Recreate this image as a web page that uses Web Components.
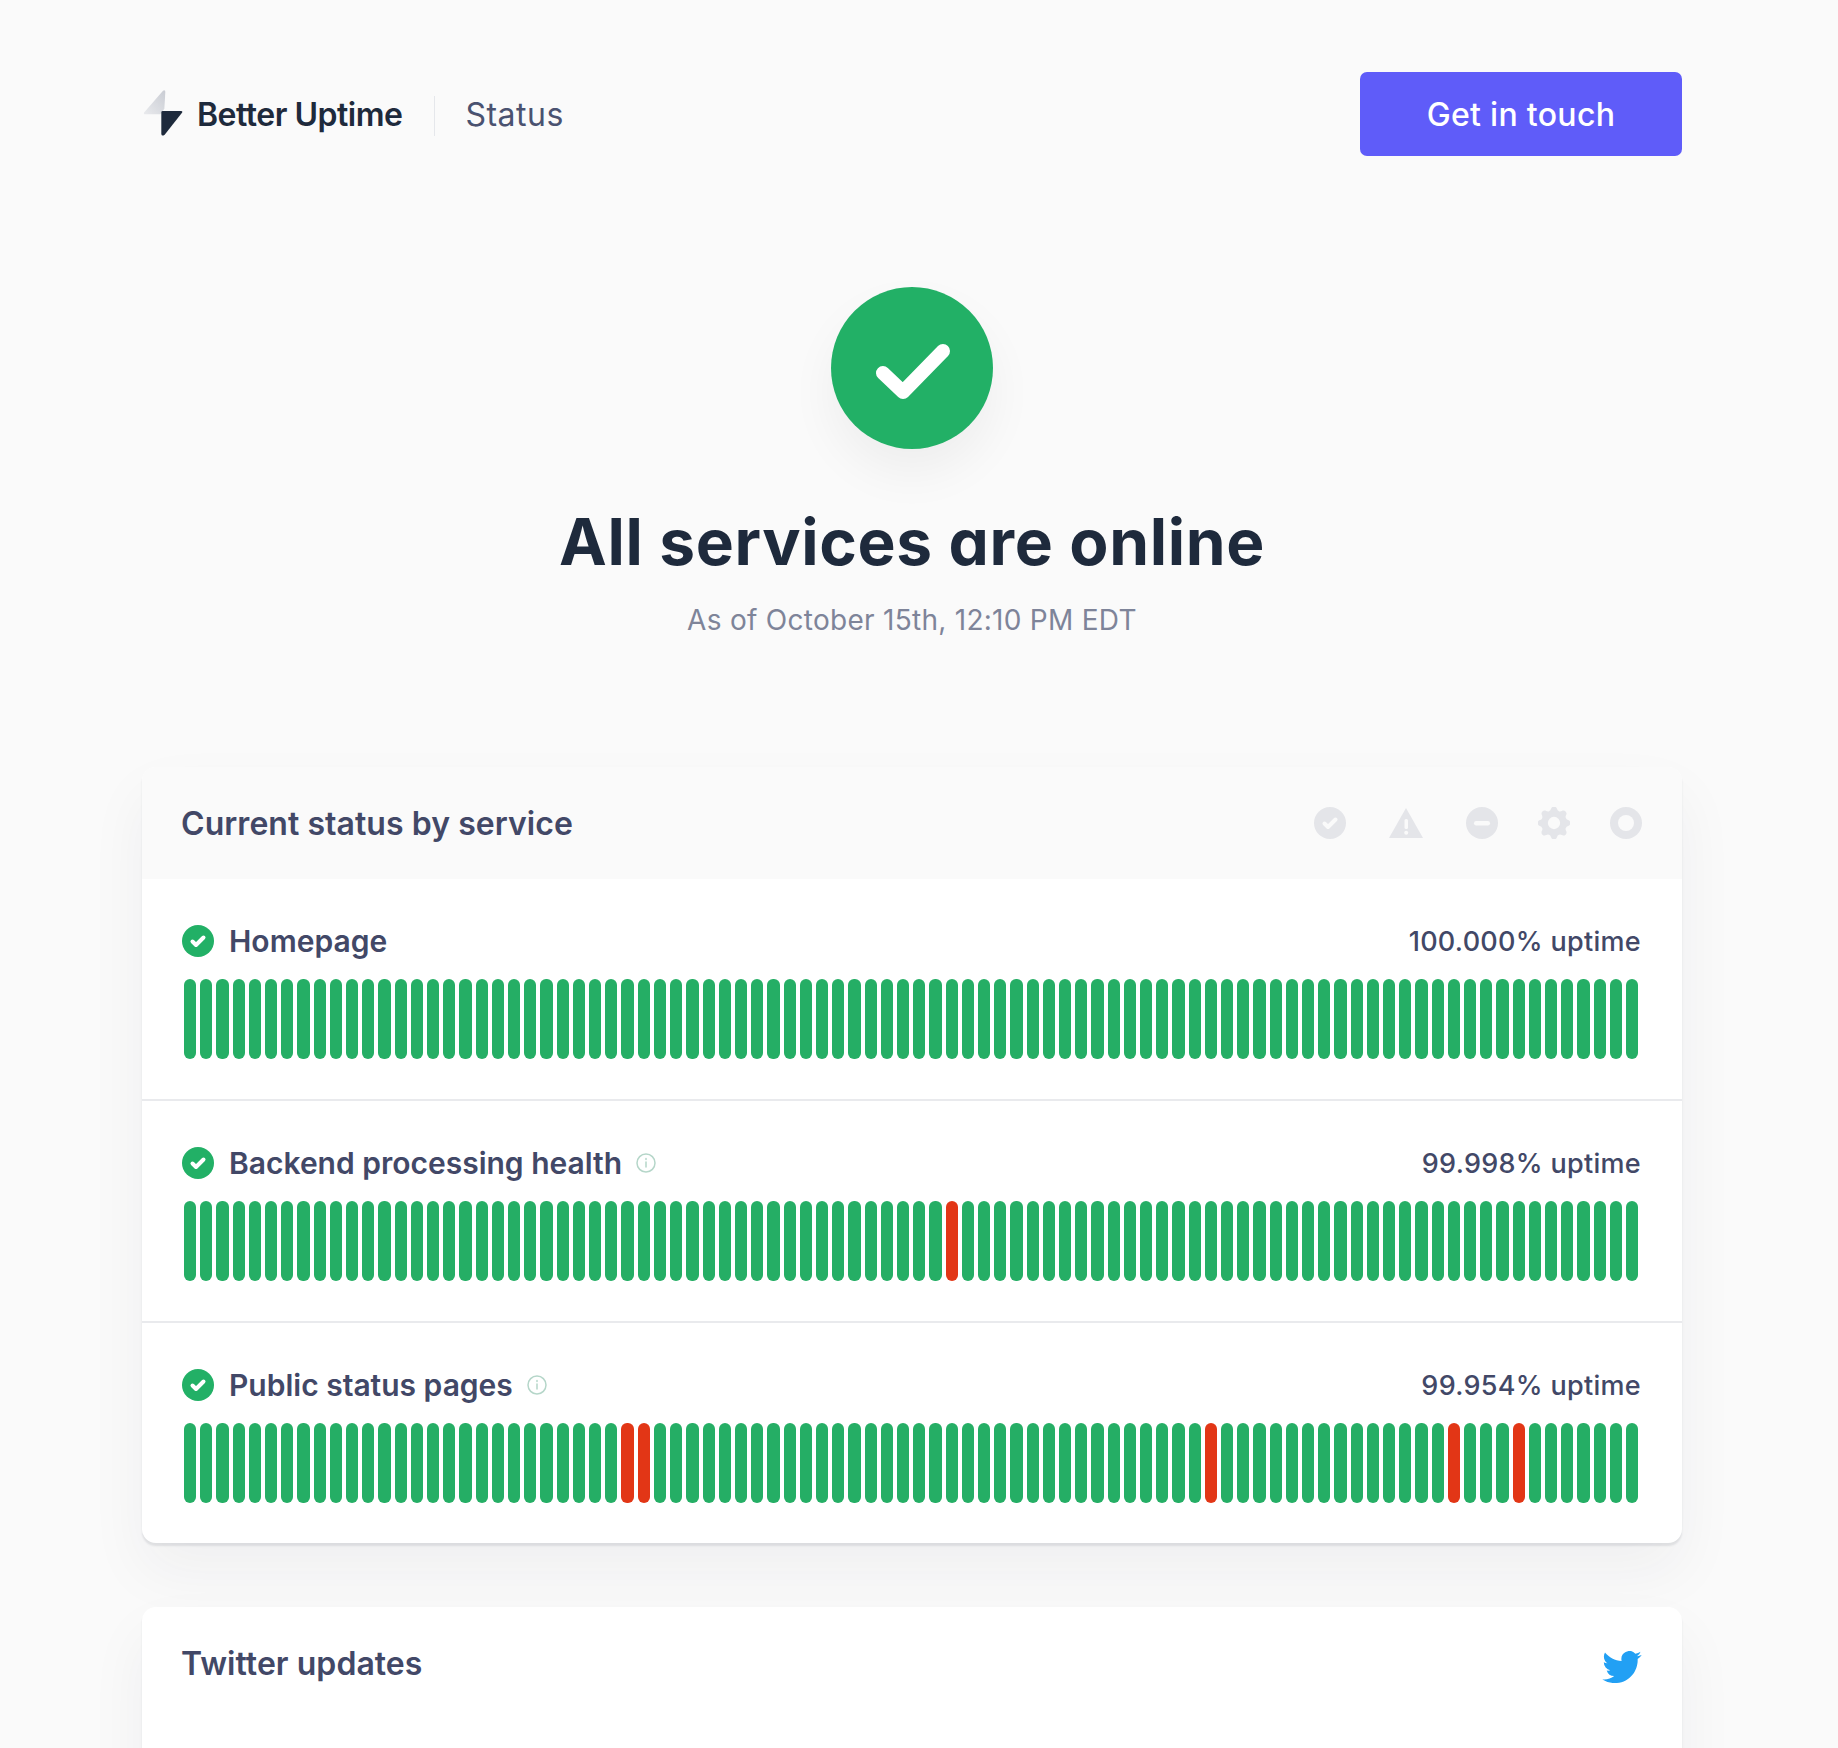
<!doctype html>
<html lang="en">
<head>
<meta charset="utf-8">
<title>Better Uptime Status</title>
<style>
  html, body { margin: 0; height: 100%; overflow: hidden; background: #fafafa; }
  body { font-family: Inter, "Noto Sans", sans-serif; color: #1e2a3c; }
  /* the reference reserves a scrollbar's width on the right, so the column sits off centre */
  .page { width: 1540px; padding-left: 142px; }
</style>
</head>
<body>
<div class="page">
  <bu-header></bu-header>
  <bu-hero title="All services are online" subtitle="As of October 15th, 12:10 PM EDT"></bu-hero>

  <bu-card heading="Current status by service" tinted>
    <bu-legend slot="actions"></bu-legend>
    <bu-service name="Homepage" uptime="100.000% uptime"></bu-service>
    <bu-service name="Backend processing health" uptime="99.998% uptime" info down="47"></bu-service>
    <bu-service name="Public status pages" uptime="99.954% uptime" info down="27,28,63,78,82"></bu-service>
  </bu-card>

  <bu-card heading="Twitter updates" class="twitter">
    <svg slot="actions" width="40" height="32" viewBox="0 0 24 19.5" aria-label="Twitter" style="display:block;margin-top:8px">
      <path transform="translate(0 -2.2)" fill="#22a0f4" d="M23.953 4.57a10 10 0 01-2.825.775 4.958 4.958 0 002.163-2.723c-.951.555-2.005.959-3.127 1.184a4.92 4.92 0 00-8.384 4.482C7.69 8.095 4.067 6.13 1.64 3.162a4.822 4.822 0 00-.666 2.475c0 1.71.87 3.213 2.188 4.096a4.904 4.904 0 01-2.228-.616v.06a4.923 4.923 0 003.946 4.827 4.996 4.996 0 01-2.212.085 4.936 4.936 0 004.604 3.417 9.867 9.867 0 01-6.102 2.105c-.39 0-.779-.023-1.17-.067a13.995 13.995 0 007.557 2.209c9.053 0 13.998-7.496 13.998-13.985 0-.21 0-.42-.015-.63A9.935 9.935 0 0024 4.59z"/>
    </svg>
    <div style="height:200px"></div>
  </bu-card>
</div>

<script>
// bu-header: logo, divider, "Status" label and the call-to-action button.
class BuHeader extends HTMLElement {
  constructor() {
    super();
    this.attachShadow({ mode: "open" }).innerHTML = `<style>
      :host { display: flex; align-items: center; justify-content: space-between; padding-top: 72px; }
      .brand { display: flex; align-items: center; height: 84px; }
      svg { display: block; margin: 0 14px 0 1px; position: relative; top: -1px; }
      .name { font-size: 32px; font-weight: 600; letter-spacing: -.5px; color: #1e2a3c; }
      .rule { width: 1px; height: 40px; background: #e5e7eb; margin: 3px 30px 0 32px; }
      .label { font-size: 32px; color: #4a5270; letter-spacing: 0.5px; }
      a { display: flex; align-items: center; justify-content: center; width: 322px; height: 84px;
          border-radius: 7px; background: #5f5cf9; color: #fff; font-size: 32px; font-weight: 500;
          letter-spacing: .3px; text-decoration: none; }
    </style>
    <div class="brand">
      <svg width="40" height="46" viewBox="40 93 120 138">
        <defs><linearGradient id="g" x1="1" y1="0" x2="0" y2="1">
          <stop offset="0" stop-color="#c9ccd3"/><stop offset="1" stop-color="#e9eaed"/>
        </linearGradient></defs>
        <path fill="url(#g)" d="M100 95q7-3 7 4l-3 50-12 17H48q-8 0-4-6z"/>
        <path fill="#1e2a3c" d="M99 156h55q6 0 3 5l-52 66q-9 6-10-2v-65q0-4 4-4z"/>
      </svg>
      <span class="name">Better Uptime</span>
      <span class="rule"></span>
      <span class="label">Status</span>
    </div>
    <a href="#">Get in touch</a>`;
  }
}

// bu-hero: big green check with the overall state below it.
class BuHero extends HTMLElement {
  constructor() {
    super();
    this.attachShadow({ mode: "open" }).innerHTML = `<style>
      :host { display: flex; flex-direction: column; align-items: center; padding-top: 131px; }
      .badge { width: 162px; height: 162px; border-radius: 50%; background: #22b066;
               box-shadow: 0 24px 48px rgba(0,0,0,.05); }
      svg { display: block; }
      h1 { margin: 52px 0 0; font-size: 64px; line-height: 82px; font-weight: 700; color: #1e2a3c;
           font-feature-settings: "cv11"; letter-spacing: .65px; }
      p { margin: 17px 0 0; font-size: 28px; line-height: 40px; color: #7e8499; letter-spacing: .28px; }
    </style>
    <div class="badge"><svg width="162" height="162" viewBox="0 0 162 162">
      <path d="M52 86l20 19 40-41" fill="none" stroke="#fff" stroke-width="14" stroke-linecap="round" stroke-linejoin="round"/>
    </svg></div>
    <h1></h1><p></p>`;
  }
  connectedCallback() {
    this.shadowRoot.querySelector("h1").textContent = this.getAttribute("title");
    this.shadowRoot.querySelector("p").textContent = this.getAttribute("subtitle");
  }
}

// bu-card: titled panel; actions go top right, rows in the default slot.
class BuCard extends HTMLElement {
  constructor() {
    super();
    this.attachShadow({ mode: "open" }).innerHTML = `<style>
      :host { display: block; margin-top: 127px; border-radius: 14px; background: #fff;
              box-shadow: 0 3px 2px rgba(31,41,55,.1), 0 28px 60px rgba(31,41,55,.05); overflow: hidden; }
      :host(.twitter) { margin-top: 64px; }
      header { display: flex; align-items: center; justify-content: space-between;
               height: 112px; padding: 0 40px; box-sizing: border-box; }
      :host([tinted]) header { background: #fafafa; }
      h2 { margin: 0 0 0 -1px; font-size: 32px; font-weight: 600; letter-spacing: .05px; color: #424867; }
    </style>
    <header><h2></h2><slot name="actions"></slot></header>
    <slot></slot>`;
  }
  connectedCallback() {
    this.shadowRoot.querySelector("h2").textContent = this.getAttribute("heading");
  }
}

// bu-legend: the greyed row of status icons in the card header.
class BuLegend extends HTMLElement {
  constructor() {
    super();
    this.attachShadow({ mode: "open" }).innerHTML = `<style>
      :host { display: flex; align-items: center; }
      svg { display: block; }
    </style>
    <svg width="32" height="32" viewBox="0 0 32 32"><circle cx="16" cy="16" r="16" fill="#e4e5e9"/><path d="M10.500 16.500l3.500 3.500 7.500-7.500" fill="none" stroke="#fafafa" stroke-width="4" stroke-linecap="round" stroke-linejoin="round"/></svg>
    <svg style="margin-left:43px" width="34" height="30" viewBox="0 0 34 30"><path d="M17 0l17 30H0z" fill="#e4e5e9"/><rect x="15.500" y="11" width="3.500" height="10" rx="1.500" fill="#fafafa"/><circle cx="17.200" cy="24.800" r="2" fill="#fafafa"/></svg>
    <svg style="margin-left:43px" width="32" height="32" viewBox="0 0 32 32"><circle cx="16" cy="16" r="16" fill="#e4e5e9"/><rect x="8" y="14" width="16" height="4.500" rx="2.200" fill="#fafafa"/></svg>
    <svg style="margin-left:40px" width="32" height="32" viewBox="2.200 2.200 15.600 15.600"><path fill="#e4e5e9" fill-rule="evenodd" d="M11.490 3.170c-.38-1.560-2.600-1.560-2.980 0a1.532 1.532 0 01-2.286.948c-1.372-.836-2.942.734-2.106 2.106.540.886.061 2.042-.947 2.287-1.561.379-1.561 2.600 0 2.978a1.532 1.532 0 01.947 2.287c-.836 1.372.734 2.942 2.106 2.106a1.532 1.532 0 012.287.947c.379 1.561 2.600 1.561 2.978 0a1.533 1.533 0 012.287-.947c1.372.836 2.942-.734 2.106-2.106a1.533 1.533 0 01.947-2.287c1.561-.379 1.561-2.600 0-2.978a1.532 1.532 0 01-.947-2.287c.836-1.372-.734-2.942-2.106-2.106a1.532 1.532 0 01-2.287-.947zM10 13a3 3 0 100-6 3 3 0 000 6z"/></svg>
    <svg style="margin-left:40px" width="32" height="32" viewBox="0 0 32 32"><circle cx="16" cy="16" r="16" fill="#e4e5e9"/><circle cx="16" cy="16" r="8" fill="#fafafa"/></svg>`;
  }
}

// bu-bars: 90 daily uptime ticks; `down` lists the indexes drawn red.
class BuBars extends HTMLElement {
  static observedAttributes = ["down"];

  constructor() {
    super();
    this.attachShadow({ mode: "open" }).innerHTML = `<style>
      :host { display: flex; gap: 4px; height: 80px; padding: 0 4px 0 2px; }
      i { flex: 1; border-radius: 6px; background: #25ae65; }
      i.down { background: #e23616; }
    </style>`;
    for (let n = 0; n < 90; n++) this.shadowRoot.append(document.createElement("i"));
  }
  attributeChangedCallback() {
    const down = (this.getAttribute("down") ?? "").split(",").filter(Boolean).map(Number);
    this.shadowRoot.querySelectorAll("i").forEach((tick, n) => {
      tick.classList.toggle("down", down.includes(n));
    });
  }
}

// bu-service: one monitored service, name and uptime over its bars.
class BuService extends HTMLElement {
  constructor() {
    super();
    this.attachShadow({ mode: "open" }).innerHTML = `<style>
      :host { display: block; padding: 40px 40px; }
      :host(:not(:last-child)) { border-bottom: 2px solid #e9eaed; }
      .top { display: flex; align-items: center; height: 44px; margin-bottom: 16px; color: #424867; }
      .check { display: block; margin-right: 15px; }
      .name { font-size: 30px; font-weight: 600; }
      .info { display: block; margin-left: 14px; }
      .uptime { margin: 0 1px 0 auto; font-size: 27px; font-weight: 500; letter-spacing: .3px; }
    </style>
    <div class="top">
      <svg class="check" width="32" height="32" viewBox="0 0 32 32"><circle cx="16" cy="16" r="16" fill="#22b066"/><path d="M10.500 16.500l3.500 3.500 7.500-7.500" fill="none" stroke="#fff" stroke-width="4" stroke-linecap="round" stroke-linejoin="round"/></svg>
      <span class="name"></span>
      <svg class="info" width="20" height="20" viewBox="0 0 20 20" fill="none" stroke="#b5d6c9" stroke-width="1.500"><circle cx="10" cy="10" r="9"/><path d="M10 9v5M10 5.500v1" stroke-linecap="round"/></svg>
      <span class="uptime"></span>
    </div>
    <bu-bars></bu-bars>`;
  }
  connectedCallback() {
    const root = this.shadowRoot;
    root.querySelector(".name").textContent = this.getAttribute("name");
    root.querySelector(".uptime").textContent = this.getAttribute("uptime");
    root.querySelector(".info").style.display = this.hasAttribute("info") ? "block" : "none";
    root.querySelector("bu-bars").setAttribute("down", this.getAttribute("down") ?? "");
  }
}

customElements.define("bu-header", BuHeader);
customElements.define("bu-hero", BuHero);
customElements.define("bu-card", BuCard);
customElements.define("bu-legend", BuLegend);
customElements.define("bu-bars", BuBars);
customElements.define("bu-service", BuService);
</script>
</body>
</html>
